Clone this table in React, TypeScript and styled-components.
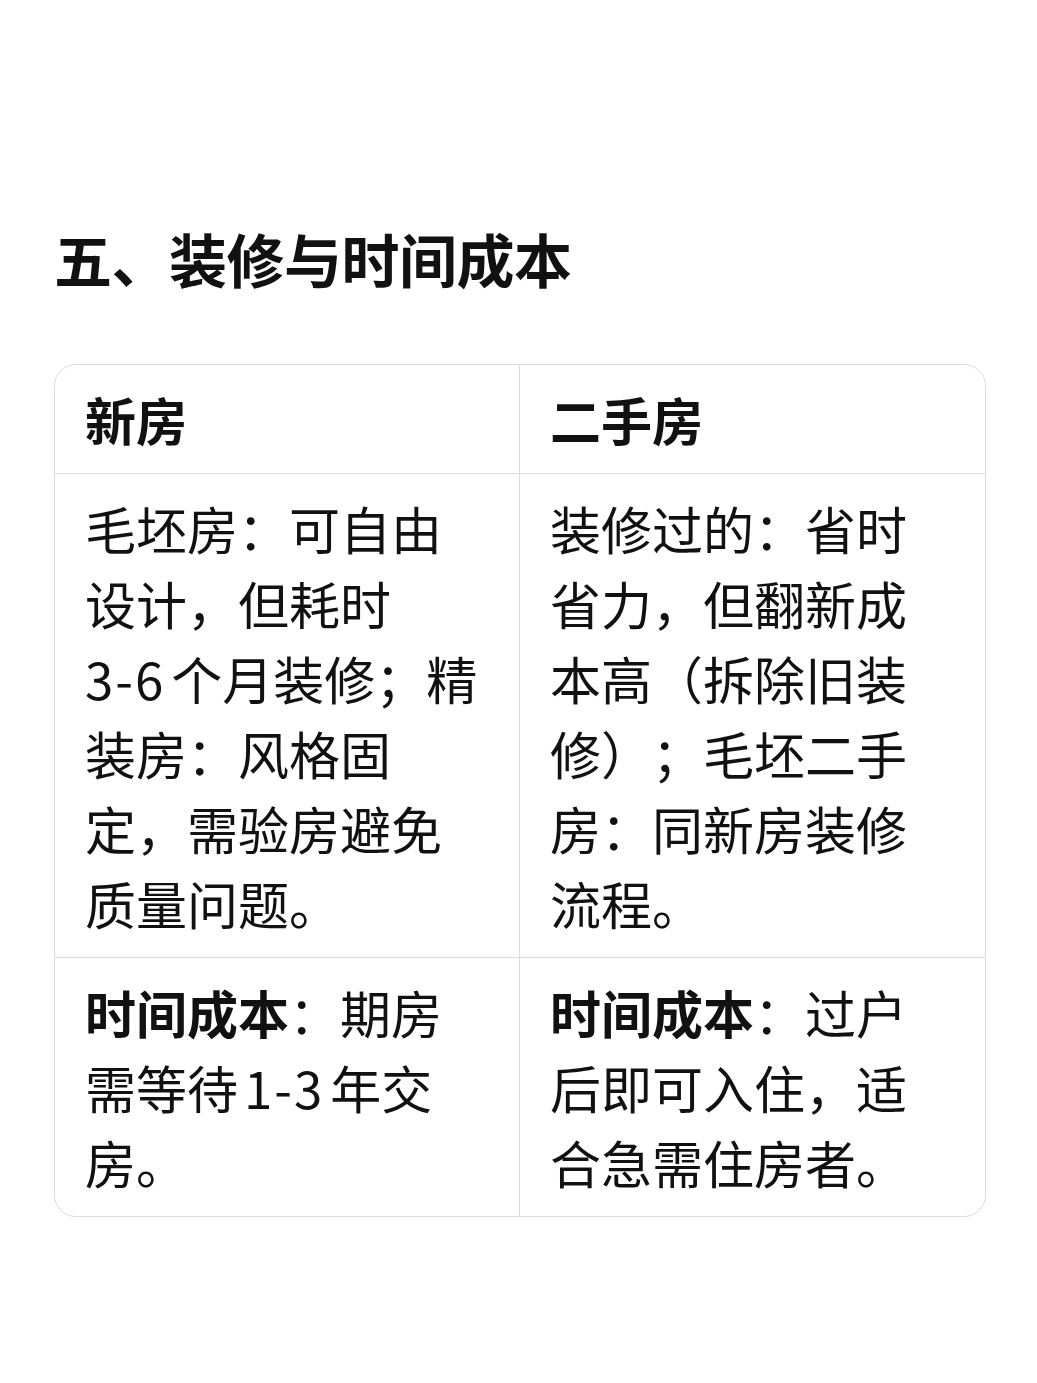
import React from 'react';
import styled, { createGlobalStyle } from 'styled-components';

const GlobalStyle = createGlobalStyle`
  html, body {
    margin: 0;
    padding: 0;
    background: #ffffff;
  }
  body {
    font-family: "Noto Sans CJK SC", "Noto Sans", sans-serif;
    color: #111111;
    text-spacing-trim: space-all;
  }
`;
const Page = styled.div`
  box-sizing: border-box;
  width: 1037px;
  min-height: 1383px;
  padding: 218px 51px 0 54px;
`;
const Heading = styled.h1`
  margin: 0 0 66px;
  font-size: 58px;
  line-height: 80px;
  font-weight: 700;
  letter-spacing: -0.5px;
`;
const Table = styled.div`
  display: grid;
  grid-template-columns: 1fr 1fr;
  border: 1px solid #dcdcdc;
  border-radius: 22px;
  overflow: hidden;
`;
const Cell = styled.div<{ $head?: boolean, $last?: boolean, $bottom?: boolean }>`
  box-sizing: border-box;
  padding: 17px 34px 16px 30px;
  font-size: 51px;
  line-height: 75px;
  font-weight: ${(p) => (p.$head ? 700 : 400)};
  border-right: ${(p) => (p.$last ? 'none' : '1px solid #dcdcdc')};
  border-bottom: ${(p) => (p.$bottom ? 'none' : '1px solid #dcdcdc')};
`;
const Strong = styled.b`
  font-weight: 700;
`;
// numbers sit a little apart from the Chinese text around them
const Num = styled.span<{ $lead?: boolean }>`
  white-space: nowrap;
  letter-spacing: 2px;
  margin: 0 6px 0 ${(p) => (p.$lead ? 0 : 6)}px;
`;

interface Row {
  left: React.ReactNode,
  right: React.ReactNode,
}

const getRows = (): Row[] => [
  {
    left: <>毛坯房：可自由设计，但耗时<br /><Num $lead>3-6</Num>个月装修；精装房：风格固定，需验房避免质量问题。</>,
    right: '装修过的：省时省力，但翻新成本高（拆除旧装修）；毛坯二手房：同新房装修流程。',
  },
  {
    left: <><Strong>时间成本</Strong>：期房需等待<Num>1-3</Num>年交房。</>,
    right: <><Strong>时间成本</Strong>：过户后即可入住，适合急需住房者。</>,
  },
];

const App: React.FC = () => {
  const rows = getRows();
  return (
    <Page>
      <GlobalStyle />
      <Heading>五、装修与时间成本</Heading>
      <Table>
        <Cell $head>新房</Cell>
        <Cell $head $last>二手房</Cell>
        {rows.map((r, i) => (
          <React.Fragment key={i}>
            <Cell $bottom={i === rows.length - 1}>{r.left}</Cell>
            <Cell $last $bottom={i === rows.length - 1}>{r.right}</Cell>
          </React.Fragment>
        ))}
      </Table>
    </Page>
  );
};
export default App;
